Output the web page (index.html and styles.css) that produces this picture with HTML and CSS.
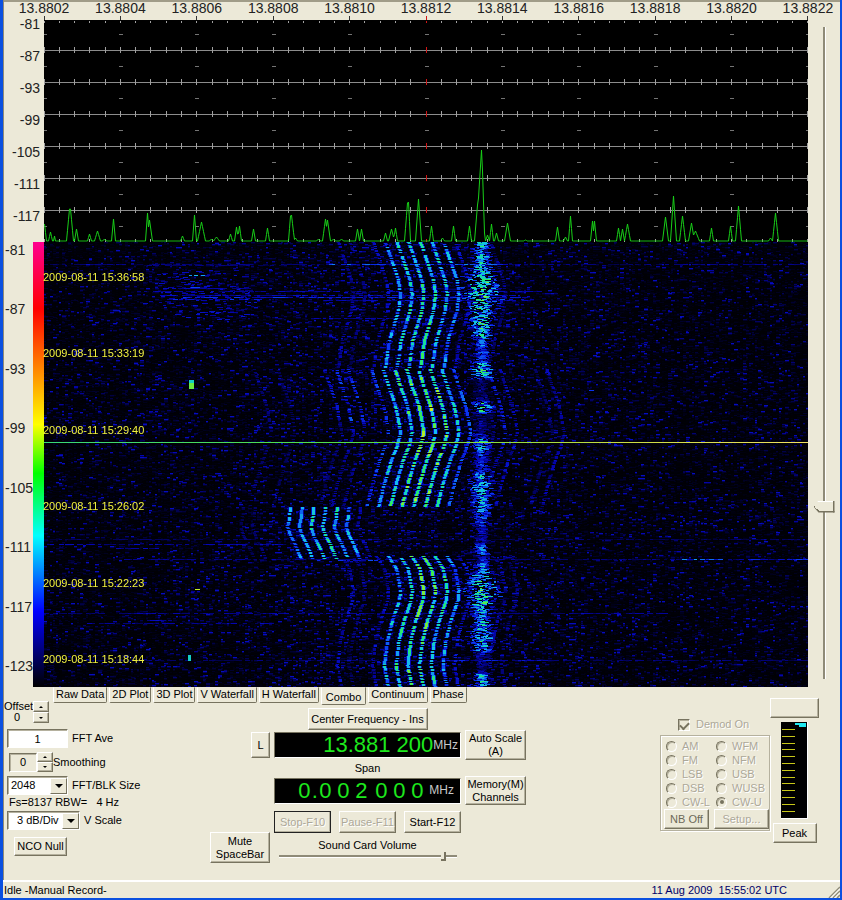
FILE: index.html
```
<!DOCTYPE html>
<html lang="en">
<head>
<meta charset="utf-8">
<title>Spectrum Analyzer</title>
<link rel="stylesheet" href="styles.css">
</head>
<body>
<main class="window">
  <section class="display">
    <div class="freq-axis" id="freq-axis"></div>
    <div class="db-axis">
      <span>-81</span><span>-87</span><span>-93</span><span>-99</span><span>-105</span><span>-111</span><span>-117</span>
    </div>
    <svg class="spectrum" id="spectrum" viewBox="0 0 764 226" preserveAspectRatio="none" role="img" aria-label="Spectrum"></svg>
    <div class="color-axis">
      <div class="color-labels">
        <span>-81</span><span>-87</span><span>-93</span><span>-99</span><span>-105</span><span>-111</span><span>-117</span><span>-123</span>
      </div>
      <div class="color-bar"></div>
    </div>
    <div class="waterfall">
      <canvas id="waterfall" width="764" height="445"></canvas>
      <div class="stamps">
        <span>2009-08-11 15:36:58</span><span>2009-08-11 15:33:19</span><span>2009-08-11 15:29:40</span><span>2009-08-11 15:26:02</span><span>2009-08-11 15:22:23</span><span>2009-08-11 15:18:44</span>
      </div>
    </div>
    <div class="level"><input class="v-slider" type="range" min="0" max="100" value="74" aria-label="Level"></div>
  </section>

  <section class="controls">
    <div class="offset">
      <label for="offset">Offset<output id="offset">0</output></label>
      <span class="spin"><button class="btn up" aria-label="Offset up"></button><button class="btn down" aria-label="Offset down"></button></span>
    </div>
    <nav class="tabs">
      <button class="tab">Raw Data</button><button class="tab">2D Plot</button><button class="tab">3D Plot</button><button class="tab">V Waterfall</button><button class="tab">H Waterfall</button><button class="tab active">Combo</button><button class="tab">Continuum</button><button class="tab">Phase</button>
    </nav>

    <div class="settings">
      <div class="field ave"><input id="ave" class="text" type="text" value="1"><label for="ave">FFT Ave</label></div>
      <div class="field smooth">
        <input id="smooth" class="text flat" type="text" value="0">
        <span class="spin"><button class="btn up" aria-label="Smoothing up"></button><button class="btn down" aria-label="Smoothing down"></button></span>
        <label for="smooth">Smoothing</label>
      </div>
      <div class="field"><span class="combo"><select id="blk"><option>2048</option></select></span><label for="blk">FFT/BLK Size</label></div>
      <p class="rbw">Fs=8137 RBW=&nbsp;&nbsp; 4 Hz</p>
      <div class="field"><span class="combo wide"><select id="vscale"><option>3 dB/Div</option></select></span><label for="vscale">V Scale</label></div>
      <button class="btn nco">NCO Null</button>
    </div>

    <div class="tuning">
      <button class="btn center-btn">Center Frequency - Ins</button>
      <button class="btn lock">L</button>
      <div class="readout"><span class="digits">13.881 200</span><span class="unit">MHz</span></div>
      <button class="btn auto">Auto Scale<br>(A)</button>
      <span class="span-label">Span</span>
      <div class="readout spaced"><span class="digits"><b>0</b><i>.</i><b>0</b><b>0</b><b>2</b><b class="group">0</b><b>0</b><b>0</b></span><span class="unit">MHz</span></div>
      <button class="btn memory">Memory(M)<br>Channels</button>
      <button class="btn mute">Mute<br>SpaceBar</button>
      <div class="run">
        <button class="btn focus" disabled>Stop-F10</button><button class="btn" disabled>Pause-F11</button><button class="btn">Start-F12</button>
      </div>
      <div class="volume"><label for="volume">Sound Card Volume</label><input class="h-slider" id="volume" type="range" min="0" max="100" value="94"></div>
    </div>

    <div class="demod">
      <label class="demod-on"><input type="checkbox" checked disabled>Demod On</label>
      <div class="modes">
        <div class="mode-grid">
          <label><input type="radio" name="mode" disabled>AM</label><label><input type="radio" name="mode" disabled>WFM</label>
          <label><input type="radio" name="mode" disabled>FM</label><label><input type="radio" name="mode" disabled>NFM</label>
          <label><input type="radio" name="mode" disabled>LSB</label><label><input type="radio" name="mode" disabled>USB</label>
          <label><input type="radio" name="mode" disabled>DSB</label><label><input type="radio" name="mode" disabled>WUSB</label>
          <label><input type="radio" name="mode" disabled>CW-L</label><label><input type="radio" name="mode" disabled checked>CW-U</label>
        </div>
        <div class="mode-buttons"><button class="btn nb">NB Off</button><button class="btn" disabled>Setup...</button></div>
      </div>
    </div>

    <div class="meter">
      <button class="btn blank" aria-label="Meter reading"></button>
      <svg class="bars" width="27" height="97" viewBox="0 0 27 97" shape-rendering="crispEdges" role="img" aria-label="Level meter">
        <rect width="27" height="97" fill="#fff"/><rect width="26" height="96" fill="#000"/>
        <path d="M14 1h11v4h-7v-2h-4z" fill="#20e8f0"/>
        <path d="M1 7.500h13M1 14.500h13M1 21.500h13M1 27.500h13M1 34.500h13M1 41.500h13M1 48.500h13M1 55.500h13M1 61.500h13M1 68.500h13M1 75.500h13M1 82.500h13M1 89.500h13" stroke="#c8c818"/>
      </svg>
      <button class="btn peak">Peak</button>
    </div>
  </section>

  <footer class="status">
    <span>Idle -Manual Record-</span>
    <time>11 Aug 2009&nbsp; 15:55:02 UTC</time>
    <svg class="grip" width="12" height="12" viewBox="0 0 12 12" aria-hidden="true"><path d="M1 12L12 1M5 12L12 5M9 12L12 9" stroke="#8f8b78" stroke-width="1.500"/><path d="M2.500 12L12 2.500M6.500 12L12 6.500" stroke="#fff"/></svg>
  </footer>
</main>
<script src="app.js"></script>
</body>
</html>
```
FILE: styles.css
```
* { box-sizing: border-box; }

body {
  margin: 0;
  background: #ece9d8;
  color: #000;
  font: 11px/13px "Liberation Sans", Arial, sans-serif;
}

button, input, select {
  font: inherit;
  color: inherit;
  margin: 0;
  border-radius: 0;
}

.window {
  display: flex;
  flex-direction: column;
  min-height: 100vh;
  border: solid #0b50e0;
  border-width: 0 2px 2px 3px;
}

/* Plots */
.display {
  display: grid;
  grid-template-columns: 40px minmax(0, 1fr) 32px;
  grid-template-rows: 16px 226px 445px;
  border-left: 1px solid #8f8b78;
  background: linear-gradient(#a09c88 2px, transparent 2px);
  color: #222;
  font-size: 14px;
  line-height: 16px;
}

.freq-axis {
  grid-column: 2;
  display: flex;
  justify-content: space-between;
}

.freq-axis span {
  width: 0;
  display: flex;
  justify-content: center;
  white-space: nowrap;
}

.db-axis {
  grid-column: 1;
  grid-row: 2;
  display: flex;
  flex-direction: column;
  align-items: flex-end;
  gap: 16px;
  padding-right: 4px;
}

.spectrum {
  grid-column: 2;
  grid-row: 2;
  width: 100%;
  height: 226px;
}

.color-axis {
  grid-column: 1;
  grid-row: 3;
  display: flex;
}

.color-labels {
  width: 29px;
  display: flex;
  flex-direction: column;
  justify-content: space-between;
  padding: 0 0 13px 1px;
}

.color-bar {
  flex: 1;
  z-index: 1;
  background: linear-gradient(#ff0090, #f00 15%, #ff8000 28%, #ff0 41%, #0f0 52%, #0ff 66%, #00f 83%, #000 100%);
}

.waterfall {
  grid-column: 2;
  grid-row: 3;
  position: relative;
}

.waterfall canvas {
  display: block;
  width: 100%;
  height: 100%;
}

.stamps {
  position: absolute;
  inset: 0 0 0 -1px;
  z-index: 2;
  display: flex;
  flex-direction: column;
  justify-content: space-between;
  padding: 28px 0 21px;
  color: #f0f040;
  font-size: 11px;
  line-height: 14px;
}

.level {
  grid-column: 3;
  grid-row: 1 / 4;
  display: flex;
  justify-content: center;
  padding: 27px 0 8px;
}

.v-slider, .h-slider {
  appearance: none;
  background: linear-gradient(to right, #8f8b78 2px, #fff 2px) center / 3px 100% no-repeat;
}

.v-slider {
  writing-mode: vertical-lr;
  width: 21px;
  height: 100%;
}

.v-slider::-webkit-slider-thumb {
  appearance: none;
  width: 21px;
  height: 12px;
  border: solid #77735f;
  border-width: 0 2px 2px 0;
  background: linear-gradient(to bottom left, transparent 50%, #77735f 50%) 0 100% / 5px 5px no-repeat, linear-gradient(#fff 1px, #ece9d8 1px);
  clip-path: polygon(5px 0, 100% 0, 100% 100%, 5px 100%, 0 50%);
}

/* Buttons */
.btn {
  padding: 0;
  border: 1px solid;
  border-color: #fff #77735f #77735f #fff;
  box-shadow: inset -1px -1px #b5b19e;
  background: #ece9d8;
  text-align: center;
}

.btn:disabled, .demod label {
  color: #aca899;
  text-shadow: 1px 1px #fff;
}

.btn.focus {
  border-color: #222;
}

.spin {
  display: flex;
  flex-direction: column;
  width: 16px;
}

.spin .btn {
  display: grid;
  place-items: center;
  height: 11px;
}

.spin .btn::before {
  content: "";
  border: 2px solid transparent;
  border-top-width: 0;
  border-bottom-color: #000;
}

.spin .down::before {
  border-width: 2px 2px 0;
  border-top-color: #000;
}

/* Control panel */
.controls {
  flex: 1;
  display: grid;
  grid-template-columns: 49px 157px 317px 1fr auto auto;
  grid-template-rows: 20px auto;
  padding-bottom: 12px;
  border-left: 1px solid #8f8b78;
}

.offset {
  grid-area: 1 / 1 / 3 / 2;
  display: flex;
  align-self: start;
  justify-content: space-between;
  padding: 14px 4px 0 0;
}

.offset label {
  line-height: 11px;
}

.offset output {
  display: block;
  padding-left: 10px;
}

.offset .spin {
  margin-left: -4px;
}

.tabs {
  grid-area: 1 / 2 / 2 / 7;
  display: flex;
  gap: 2px;
  align-items: flex-start;
}

.tab {
  height: 16px;
  padding: 0 2px 1px;
  border: 1px solid;
  border-color: transparent #77735f #77735f #fff;
  border-radius: 0 0 2px 2px;
  background: #ece9d8;
  white-space: nowrap;
}

.tab.active {
  height: 18px;
  padding: 3px 4px 1px;
}

.settings {
  grid-area: 2 / 1 / 3 / 3;
  display: flex;
  flex-direction: column;
  align-items: flex-start;
  gap: 4px;
  padding: 22px 0 0 3px;
}

.field {
  display: flex;
  align-items: center;
  gap: 4px;
}

.text {
  width: 61px;
  height: 19px;
  padding: 0;
  border: 1px solid;
  border-color: #77735f #fff #fff #77735f;
  box-shadow: inset 1px 1px #b5b19e;
  background: #fff;
  text-align: center;
}

.text.flat {
  width: 28px;
  background: #ece9d8;
}

.smooth {
  gap: 0;
  padding-left: 2px;
}

.smooth .spin .btn { height: 10px; }

.combo {
  position: relative;
  width: 61px;
  height: 19px;
}

.combo.wide { width: 73px; }

.combo select {
  appearance: none;
  width: 100%;
  height: 100%;
  padding: 0 18px 0 3px;
  border: 1px solid;
  border-color: #77735f #fff #fff #77735f;
  box-shadow: inset 1px 1px #b5b19e;
  background: #fff;
}

.combo.wide select { padding-left: 9px; }

.combo::before, .combo::after {
  content: "";
  position: absolute;
  pointer-events: none;
}

.combo::before {
  right: 1px;
  top: 2px;
  bottom: 1px;
  width: 15px;
  border: 1px solid;
  border-color: #fff #77735f #77735f #fff;
  background: #ece9d8;
}

.combo::after {
  right: 5px;
  top: 8px;
  border: 4px solid transparent;
  border-width: 4px 4px 0;
  border-top-color: #000;
}

.rbw {
  margin: -3px 0 -2px 2px;
}

.nco {
  width: 53px;
  height: 19px;
  margin: 3px 0 0 7px;
}

/* Tuning */
.tuning {
  grid-area: 2 / 3;
  display: grid;
  grid-template-columns: 60px 187px 61px;
  grid-template-rows: 22px 30px 16px 29px 34px 26px;
  column-gap: 4px;
  align-items: center;
  justify-items: center;
  align-content: start;
  padding-top: 1px;
}

.center-btn { grid-area: 1 / 2; width: 120px; height: 22px; }
.lock { grid-area: 2 / 1; justify-self: end; width: 19px; height: 26px; }
.auto { grid-area: 2 / 3; width: 61px; height: 30px; }
.span-label { grid-area: 3 / 2; }
.memory { grid-area: 4 / 3; width: 61px; height: 29px; }
.mute { grid-area: 5 / 1 / 7 / 2; align-self: end; width: 60px; height: 31px; margin-bottom: 2px; }

.readout {
  grid-area: 2 / 2;
  display: flex;
  align-items: center;
  justify-content: flex-end;
  width: 187px;
  height: 26px;
  padding-right: 2px;
  border: 1px solid;
  border-color: #77735f #fff #fff #77735f;
  background: #000;
}

.digits {
  color: #1de81d;
  font-size: 22px;
  line-height: 24px;
}

.unit {
  color: #c8c8c8;
  font-size: 12px;
}

.spaced {
  grid-area: 4 / 2;
  padding-right: 6px;
}

.spaced .digits { display: flex; padding-right: 3px; }
.spaced b { width: 18px; font-weight: 400; text-align: center; }
.spaced i { display: flex; justify-content: center; width: 3px; font-style: normal; }
.spaced .group { margin-left: 2px; }

.run {
  grid-area: 5 / 2;
  display: flex;
  justify-content: space-between;
  width: 100%;
}

.run .btn { width: 57px; height: 22px; }

.volume {
  grid-area: 6 / 2;
  align-self: start;
  display: flex;
  flex-direction: column;
  align-items: center;
  width: 100%;
}

.h-slider {
  width: 178px;
  height: 9px;
  background: linear-gradient(#8f8b78 2px, #fff 2px) center / 100% 3px no-repeat;
}

.h-slider::-webkit-slider-thumb {
  appearance: none;
  width: 5px;
  height: 9px;
  border: solid #77735f;
  border-width: 0 2px 2px 0;
  background: #ece9d8;
}

/* Demodulator */
.demod {
  grid-area: 1 / 5 / 3 / 6;
  padding-top: 31px;
}

.demod label { display: flex; align-items: center; }
.demod-on { gap: 6px; padding-left: 18px; height: 13px; }

.demod input {
  appearance: none;
  display: grid;
  place-items: center;
  width: 12px;
  height: 12px;
  border: 1px solid;
  border-color: #77735f #fff #fff #77735f;
  box-shadow: inset 1px 1px #b5b19e;
}

.demod input[type="checkbox"]:checked::before {
  content: "";
  width: 7px;
  height: 4px;
  border: solid #77735f;
  border-width: 0 0 2px 2px;
  transform: rotate(-45deg);
}

.modes {
  width: 110px;
  margin-top: 4px;
  padding: 3px 0 1px 5px;
  border: 1px solid #b5b19e;
  box-shadow: inset 1px 1px #fff, 1px 1px #fff;
}

.mode-grid {
  display: grid;
  grid-template-columns: 50px 56px;
  grid-auto-rows: 14px;
}

.demod .mode-grid label { gap: 5px; }
.demod .mode-grid input { width: 11px; height: 11px; border-radius: 50%; }

.demod input[type="radio"]:checked::before {
  content: "";
  width: 4px;
  height: 4px;
  border-radius: 50%;
  background: #77735f;
}

.mode-buttons { display: flex; gap: 5px; margin-left: -2px; }
.mode-buttons .btn { width: 55px; height: 20px; }
.mode-buttons .nb { width: 45px; color: #6c6958; }

.meter {
  grid-area: 1 / 6 / 3 / 7;
  display: flex;
  flex-direction: column;
  align-items: center;
  gap: 4px;
  padding: 11px 21px 0 0;
}

.blank { width: 49px; height: 20px; }
.peak { width: 44px; height: 20px; }

/* Status bar */
.status {
  display: flex;
  align-items: center;
  height: 18px;
  padding-left: 1px;
  border-top: 2px solid #fff;
}

.status time { margin-left: auto; color: #000068; }
.grip { align-self: flex-end; margin-left: 41px; }
```
FILE: app.js
```
// Frequency scale
const axis = document.getElementById('freq-axis');
for (let f = 138802; f <= 138822; f += 2) {
  const s = document.createElement('span');
  s.textContent = (f / 10000).toFixed(4);
  axis.append(s);
}

// Spectrum: grid and trace, in plot coordinates (the first 4 rows hold the scale ticks)
const W = 764, STEP = W / 50;
let grid = '', major = '', red = '', ticks = '', dashes = '';
for (let r = 0; r < 8; r++) {
  const y = r ? 2.5 + 32 * r : 4.5;
  if (r) grid += `M0 ${y}H${W}`;
  for (let i = 0; i <= 50; i++) {
    const x = Math.min(W - 0.5, Math.floor(i * STEP) + 0.5);
    const seg = `M${x} ${r ? y - 3.5 : y}V${y + 2.5}`;
    if (i === 25) red += seg; else ticks += seg;
    if (r < 7 && i % 5 === 0) dashes += `M${x - 2} ${18.5 + 32 * r}H${x + 2}`;
  }
}
for (let i = 0; i <= 10; i++) {
  const x = Math.min(W - 0.5, Math.floor(i * W / 10) + 0.5);
  if (i === 5) red += `M${x} 0V4`; else major += `M${x} 0V4`;
}
// [x, peak row, half width]
const peaks = [[0,208,2],[6,216,2],[10,220,1],[25,193,3],[26,193,3],[32,213,2],[45,218,2],[53,215,3],[60,223,2],
[69,203,2],[103,197,2],[105,204,3],[138,220,2],[150,199,2],[157,206,4],[167,223,2],[172,221,3],[186,218,2],
[192,211,2],[195,210,2],[209,213,2],[223,212,2],[246,200,2],[247,199,3],[251,222,2],[274,223,2],[281,203,3],
[283,204,3],[289,223,2],[297,223,2],[313,213,2],[317,213,2],[341,217,2],[347,213,3],[351,212,2],[363,187,3],
[364,186,2],[374,183,3],[387,210,2],[398,222,2],[409,210,2],[425,210,2],[443,219,2],[447,208,2],[452,217,2],
[463,207,3],[481,224,2],[513,211,2],[521,221,2],[526,200,2],[548,205,2],[550,205,2],[574,212,2],[578,213,2],
[583,208,3],[621,201,3],[629,180,3],[638,200,3],[647,207,3],[651,215,4],[667,212,2],[686,210,2],[694,190,3],
[726,222,2],[731,197,3]];
const BASE = 225;
let pts = '';
for (let x = 0; x < W; x++) {
  let y = BASE;
  for (const [px, py, w] of peaks) {
    const d = Math.abs(x - px);
    if (d < w) y = Math.min(y, BASE - (BASE - py) * (1 - d / w));
  }
  if (x >= 431 && x <= 433) y = BASE - 12 * (x - 430);
  if (x >= 434 && x <= 437) y = 182 - (x - 434) * 16;
  if (x >= 438 && x <= 440) y = 155 + (x - 438) * 31;
  pts += `${x + 0.5},${y} `;
}
document.getElementById('spectrum').innerHTML =
  `<rect y="4" width="${W}" height="222" fill="#000"/>
   <g fill="none" shape-rendering="crispEdges"><path d="${grid}" stroke="#8c8c8c"/><path d="${ticks}" stroke="#a0a0a0"/><path d="${dashes}" stroke="#747474"/>
   <path d="${major}" stroke="#333"/><path d="${red}" stroke="#d01818"/></g>
   <polyline points="${pts}" fill="none" stroke="#18d018" stroke-width="1"/>`;

// Waterfall
const canvas = document.getElementById('waterfall');
const ctx = canvas.getContext('2d');
const H = canvas.height;
let seed = 20090811;
function rnd() {
  seed = (seed + 0x6d2b79f5) | 0;
  let t = Math.imul(seed ^ (seed >>> 15), 1 | seed);
  t = (t + Math.imul(t ^ (t >>> 7), 61 | t)) ^ t;
  return ((t ^ (t >>> 14)) >>> 0) / 4294967296;
}
const level = new Float32Array(W * H);
function put(x, y, len, v) {
  x = Math.round(x);
  for (let i = 0; i < len; i++) {
    const p = x + i;
    if (p >= 0 && p < W && y >= 0 && y < H && v > level[y * W + p]) level[y * W + p] = v;
  }
}
function interp(table, y) {
  for (let i = 1; i < table.length; i++) {
    if (y <= table[i][0]) {
      const [y0, a] = table[i - 1], [y1, b] = table[i];
      return a + (b - a) * (y - y0) / (y1 - y0);
    }
  }
  return table[table.length - 1][1];
}
// Noise floor, denser around the carriers
for (let y = 0; y < H; y++) {
  for (let x = 0; x < W; x += 3) {
    const centre = Math.exp(-Math.pow((x - 360) / 190, 2));
    const e = -Math.log(1 - rnd());
    const v = Math.min(0.22, e * e * (0.010 + 0.007 * centre));
    const len = 2 + Math.floor(rnd() * 3);
    put(x, y, len, v);
    if (v > .06) put(x, y + 1, len, v * .45);
  }
}
// Horizontal bursts: row, start, end, strength
[[22,0,764,.15],[22,285,480,.36],[23,100,240,.15],[46,110,200,.2],[49,100,500,.2],[53,120,480,.22],[55,130,480,.28],[57,120,220,.28],
[76,270,400,.2],[58,280,480,.22],[297,0,764,.12],[302,0,240,.2],[306,60,120,.2],[317,80,764,.16],[317,638,676,.38],[317,704,764,.3],
[371,0,620,.18],[381,40,240,.18],[378,100,130,.28],[418,0,764,.14],[418,400,520,.26],[318,270,350,.3]]
.forEach(([y, a, b, v]) => {
  for (let x = a; x < b; x += 3) if (rnd() < .6) put(x, y, 3 + Math.floor(rnd() * 4), v * (.5 + rnd() * .6));
});
// Scatter around the left-hand burst
for (let i = 0; i < 150; i++) {
  put(155 + (rnd() + rnd() - 1) * 60, 28 + Math.floor(rnd() * 50), 3 + Math.floor(rnd() * 4), .12 + rnd() * .12);
}
// Drifting carriers: x of the first line by row, then [line number, strength]
const lines = (from, to, table, set) => {
  for (const [k, s] of set) {
    let glow = 1;
    for (let y = from; y < to; y++) {
      if (rnd() < .35) glow = .65 + rnd() * .55;
      if (y % 3 === 0 && rnd() < .45 || rnd() < .1) continue;
      if (s < .3 && rnd() < .3) continue;
      const x = interp(table, y) + k * 11.7;
      const v = s * glow;
      put(x - 2, y, s > .35 ? 5 : 4, v * .45);
      put(x - 1, y, 3, v);
    }
  }
};
const faint = [[-11,.12],[-9,.11],[-1,.29],[6,.32],[8,.16],[9,.24],[10,.2],[13,.12],[14,.18]];
lines(0, 126, [[0,341],[20,348],[38,354],[52,356],[68,354],[98,345],[126,341]],
  [[0,.42],[1,.5],[2,.54],[3,.54],[4,.47],[5,.42],[-1,.2],[-3,.13],[-4,.17],[6,.22],[9,.14]]);
lines(127, 265, [[127,339],[143,344],[163,351],[178,354],[190,356],[203,353],[218,347],[238,341],[265,334]],
  [[0,.47],[1,.58],[2,.64],[3,.66],[4,.62],[5,.5]].concat(faint));
lines(127, 180, [[127,339],[143,344],[163,351],[180,354]], [[-5,.25],[-4,.29],[-3,.27]]);
lines(180, 265, [[180,354],[190,356],[203,353],[218,347],[238,341],[265,334]], [[-5,.13],[-4,.17],[-3,.17]]);
lines(265, 317, [[265,246],[276,245],[284,243],[293,246],[303,251],[317,257]],
  [[0,.4],[1,.44],[2,.5],[3,.54],[4,.48],[5,.44],[6,.17],[-3,.12],[-4,.12]]);
lines(314, 445, [[314,344],[326,352],[348,356],[358,355],[378,348],[398,343],[423,340],[445,344]],
  [[0,.44],[1,.54],[2,.6],[3,.62],[4,.54],[5,.42],[-1,.21],[-3,.13],[-4,.2],[6,.22],[9,.16],[10,.14]]);
// Broad noisy signal: half width and strength by row
const width = [[0,5],[22,6],[30,9],[38,14],[55,16],[70,9],[100,6],[118,5],[128,8],[136,9],[140,5],[158,8],[170,9],[176,5],[195,6],[228,6],[240,10],[260,7],[300,5],[322,5],[345,14],[360,10],[378,5],[390,9],[405,7],[430,4],[445,6]];
const force = [[0,.55],[26,.5],[36,.64],[60,.6],[92,.58],[104,.36],[117,.38],[124,.54],[135,.64],[138,.12],[157,.14],[160,.5],[169,.55],[172,.14],[190,.16],[196,.46],[206,.48],[213,.28],[228,.3],[234,.52],[258,.5],[275,.4],[288,.22],[300,.2],[303,.45],[311,.4],[314,.2],[324,.4],[345,.6],[362,.6],[372,.5],[392,.6],[406,.5],[414,.18],[428,.16],[432,.5],[445,.5]];
for (let y = 0; y < H; y++) {
  const w = interp(width, y), f = interp(force, y) * (.75 + rnd() * .4);
  for (let i = 0; i < 7; i++) {
    const g = (rnd() + rnd() + rnd() - 1.5) * 1.6;
    put(436 + g * w, y, 2 + Math.floor(rnd() * 4), f * (.3 + rnd() * .8) * (1.1 - Math.abs(g) * .4));
  }
}
// Isolated spots
for (let y = 138; y < 147; y++) put(145, y, 5, y < 141 ? .5 : .7);
for (let y = 413; y < 419; y++) put(144, y, 3, .5);
put(151, 347, 5, .78); put(145, 33, 3, .4); put(150, 33, 4, .45); put(157, 33, 4, .42);
put(147, 45, 9, .32); put(366, 148, 5, .5); put(545, 148, 5, .3);

const stops = [[0,0,0,5],[.06,0,0,48],[.2,4,4,180],[.3,10,50,240],[.45,20,190,240],[.56,20,225,150],[.66,60,235,80],[.8,220,240,30]];
const img = ctx.createImageData(W, H);
for (let i = 0; i < W * H; i++) {
  const v = Math.min(level[i], .8);
  let k = 1;
  while (k < stops.length - 1 && v > stops[k][0]) k++;
  const a = stops[k - 1], b = stops[k], t = (v - a[0]) / (b[0] - a[0]);
  for (let c = 0; c < 3; c++) img.data[i * 4 + c] = a[c + 1] + (b[c + 1] - a[c + 1]) * t;
  img.data[i * 4 + 3] = 255;
}
ctx.putImageData(img, 0, 0);
// Marker line
const marker = ctx.createLinearGradient(0, 0, W, 0);
marker.addColorStop(0, '#38d878');
marker.addColorStop(.45, '#58e040');
marker.addColorStop(.75, '#c8dc40');
marker.addColorStop(1, '#f0e060');
ctx.fillStyle = marker;
ctx.fillRect(0, 200, W, 1);
```
